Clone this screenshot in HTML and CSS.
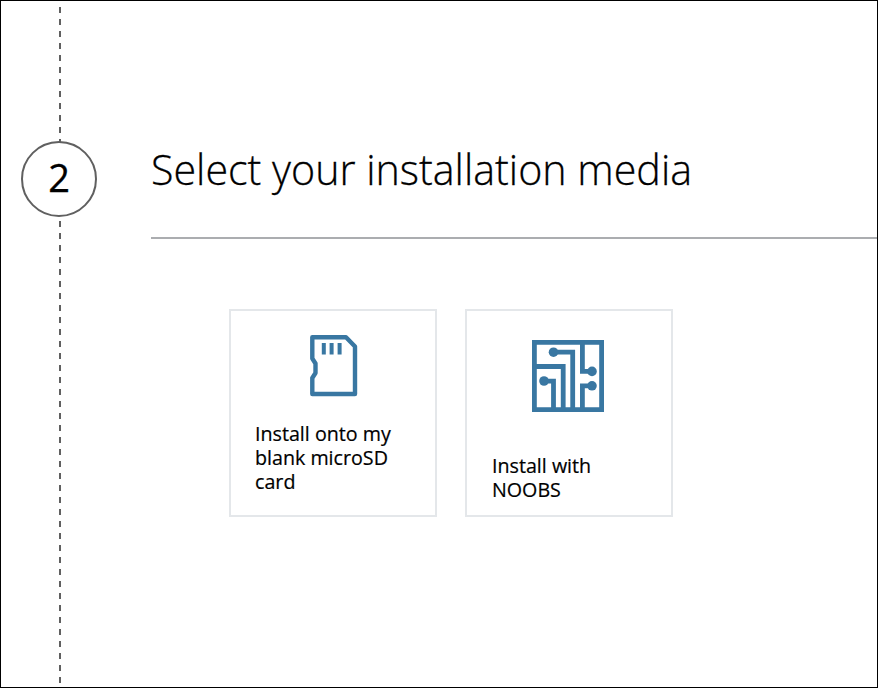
FILE: index.html
```html
<!DOCTYPE html>
<html lang="en">
<head>
<meta charset="utf-8">
<title>Select your installation media</title>
<link rel="stylesheet" href="styles.css">
</head>
<body>
<main class="frame">
  <div class="rail">
    <div class="dashes dashes-top"></div>
    <div class="step">2</div>
    <div class="dashes dashes-bottom"></div>
  </div>
  <section class="content">
    <h1 class="title"><span>Select your installation media</span></h1>
    <div class="cards">
      <div class="card card-sd">
        <svg class="icon" width="48" height="62" viewBox="0 0 48 62">
          <path d="M2.3 2.3H36L45 11.5V59H2.3V43L5.5 38V28.5L2.3 23.5Z" fill="none" stroke="#3977a2" stroke-width="4.4" stroke-linejoin="round"/>
          <path d="M11.8 8h4v11.5h-4zM19.6 8h4v11.5h-4zM27.6 8h4v11.5h-4z" fill="#3977a2"/>
        </svg>
        <p class="label">Install onto my<br>blank microSD<br>card</p>
      </div>
      <div class="card card-noobs">
        <svg class="icon" width="72" height="72" viewBox="0 0 72 72">
          <g fill="none" stroke="#3977a2" stroke-width="4.8">
            <path d="M2.4 2.4h67.2v67.2H2.4z"/>
            <path d="M21.5 12.2H40.7V70M2 26.5H31.2V70M12 41.2H21.5V70M50.4 2V31.4H60M60 45.8H50.4V70"/>
          </g>
          <g fill="#3977a2"><circle cx="21.5" cy="12.2" r="4.8"/><circle cx="12" cy="41" r="4.8"/><circle cx="60" cy="31.4" r="4.8"/><circle cx="60" cy="45.8" r="4.8"/></g>
        </svg>
        <p class="label">Install with<br>NOOBS</p>
      </div>
    </div>
  </section>
</main>
</body>
</html>
```
FILE: styles.css
```css
* { box-sizing: border-box; }
body {
  margin: 0;
  background: #fff;
  color: #000;
  font-family: "Open Sans", "Noto Sans", sans-serif;
}
.frame {
  display: flex;
  width: 878px;
  height: 688px;
  border: 1px solid #000;
  overflow: hidden;
}
.rail {
  display: flex;
  flex-direction: column;
  align-items: center;
  width: 76px;
  margin-left: 20px;
  flex: none;
}
.dashes {
  width: 2px;
  margin-left: 2px;
  background: repeating-linear-gradient(to bottom, #606060 0 6px, transparent 6px 12px);
}
.dashes-top { height: 135px; margin-top: 6px; }
.dashes-bottom { height: 462px; margin-top: 4px; }
.step {
  flex: none;
  width: 76px;
  height: 76px;
  margin-top: -1px;
  border: 2px solid #606060;
  border-radius: 50%;
  font-size: 38px;
  line-height: 69px;
  text-align: center;
  -webkit-text-stroke: 0.3px #000;
}
.content {
  flex: 1;
  margin-left: 54px;
}
.title {
  height: 102px;
  margin: 136px 0 0;
  border-bottom: 2px solid #abadb0;
  font-size: 43px;
  font-weight: 300;
  line-height: 64px;
  white-space: nowrap;
}
.title span {
  display: inline-block;
  transform: scaleX(0.958);
  transform-origin: 0 0;
  -webkit-text-stroke: 0.3px #000;
}
.cards {
  display: flex;
  gap: 28px;
  margin: 70px 0 0 78px;
}
.card {
  width: 208px;
  height: 208px;
  padding: 24px 24px 0;
  border: 2px solid #e4e7ea;
}
.card-noobs { padding: 29px 25px 0; }
.icon { display: block; margin: 0 auto; }
.card-sd .icon { margin-left: 55px; }
.card-noobs .icon { margin-left: 40px; }
.label {
  margin: 25px 0 0;
  font-size: 20px;
  line-height: 24px;
  white-space: nowrap;
  transform: scaleX(0.983);
  transform-origin: 0 0;
  -webkit-text-stroke: 0.2px #000;
}
.card-noobs .label { margin-top: 42px; }
```
